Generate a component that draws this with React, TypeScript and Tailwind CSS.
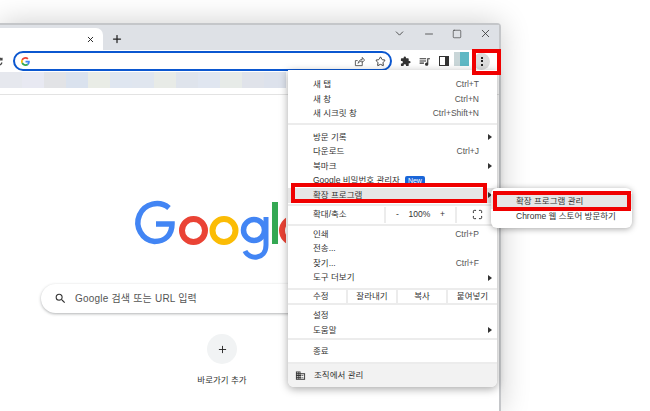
import { Maximize, Minus, Plus, Square, Star, X, ChevronDown } from "lucide-react";
import { MdDomain, MdExtension, MdQueueMusic, MdSearch } from "react-icons/md";

const kr = "font-['Segoe_UI','Liberation_Sans','Noto_Sans_CJK_KR',sans-serif]";

const patches = ["#e6e8ee", "#e8e9f2", "#e2e3e6", "#dae2ee", "#e9ece6", "#dfe6f0", "#e0e6ef", "#e8ebe7", "#dfe4ec", "#e0e6f0", "#e7ebe8", "#e0e3ea", "#dde2ec"];

function Row({ label, shortcut, arrow }: { label: string; shortcut?: string; arrow?: boolean }) {
    return (
        <div className="flex h-[14.6px] items-center pl-[25px] pr-[5px] text-[#333]">
            <span className="flex-1 whitespace-nowrap">{label}</span>
            {shortcut && <span className="mr-[13px] text-[#555]">{shortcut}</span>}
            {arrow && <span className="h-0 w-0 border-y-[3px] border-l-[4px] border-y-transparent border-l-[#333]" />}
        </div>
    );
}

function GoogleLogo() {
    return (
        <svg width="158" height="70" viewBox="0 0 158 70" aria-label="Google" className="block">
            <path d="M41 13 A19 19 0 1 0 26.500 46.500 C37 46.500 44 40 44 29 L28 29" fill="none" stroke="#4285f4" strokeWidth="5.500" />
            <circle cx="65.500" cy="35.500" r="11.500" fill="none" stroke="#ea4335" strokeWidth="6" />
            <circle cx="96" cy="35.500" r="11.500" fill="none" stroke="#fbbc05" strokeWidth="6" />
            <circle cx="126" cy="35" r="10.500" fill="none" stroke="#4285f4" strokeWidth="5.500" />
            <path d="M138 22 V50 C138 65 121 65 117 56" fill="none" stroke="#4285f4" strokeWidth="5" />
            <path d="M147 7 V49" stroke="#34a853" strokeWidth="6" />
            <circle cx="166" cy="35.500" r="12" fill="none" stroke="#ea4335" strokeWidth="6" />
        </svg>
    );
}

export default function App() {
    return (
        <div className={`relative h-[411px] w-[650px] overflow-hidden bg-white text-[8.5px] ${kr}`}>
            {/* browser window */}
            <div className="absolute left-0 top-[23px] flex h-[388px] w-[501px] flex-col rounded-tr-[4px] border-r-2 border-t-2 border-[#c4c6c9] bg-white shadow-[0_0_30px_rgba(0,0,0,0.2)]">
                {/* tab strip */}
                <div className="flex h-[25px] shrink-0 items-end bg-[#dee1e6]">
                    <div className="flex h-[22px] w-[103px] items-center justify-end rounded-tr-[7px] bg-white pr-[8px]">
                        <X size={9} strokeWidth={2.5} className="text-[#222]" />
                    </div>
                    <div className="ml-[7.5px] flex h-[22px] items-start pt-[5px]">
                        <Plus size={12} strokeWidth={2.5} className="text-[#222]" />
                    </div>
                    <div className="flex-1" />
                    <div className="mb-[10px] flex items-center gap-[17px] pr-[7px] text-[#333]">
                        <ChevronDown size={13} strokeWidth={1.5} />
                        <Minus size={12} strokeWidth={1.5} />
                        <Square size={10} strokeWidth={1.5} className="rounded-[2px]" />
                        <X size={13} strokeWidth={1.5} />
                    </div>
                </div>
                {/* toolbar */}
                <div className="relative flex h-[22px] shrink-0 items-center bg-white">
                    <div className="w-[13px] overflow-hidden">
                        <svg width="9" height="9" viewBox="0 0 9 9" fill="none" stroke="#444" strokeWidth="1.2" className="ml-[-6px]">
                            <path d="M7.500 2.500A3.600 3.600 0 1 0 8 5.500M8 .8V3H5.800" />
                        </svg>
                    </div>
                    <div className="flex h-[20px] w-[379px] items-center rounded-full border-2 border-[#0b57d0] pl-[6px] pr-[4.5px]">
                        <svg width="9" height="9" viewBox="0 0 48 48">
                            <path fill="#ea4335" d="M24 9.5c3.5 0 6.7 1.2 9.2 3.6l6.9-6.9C35.9 2.4 30.5 0 24 0 14.6 0 6.5 5.4 2.6 13.2l8 6.2C12.4 13.7 17.700 9.500 24 9.500z" />
                            <path fill="#4285f4" d="M47 24.500c0-1.600-.100-3.100-.400-4.500H24v9h13c-.600 3-2.200 5.500-4.800 7.200l7.700 6C44.400 38 47 31.800 47 24.500z" />
                            <path fill="#fbbc05" d="M10.500 28.600c-.500-1.400-.800-3-.800-4.600s.300-3.200.800-4.600l-8-6.200C.900 16.500 0 20.100 0 24s.900 7.500 2.600 10.800l7.900-6.200z" />
                            <path fill="#34a853" d="M24 48c6.500 0 11.900-2.100 15.900-5.800l-7.700-6c-2.200 1.400-4.900 2.300-8.200 2.300-6.300 0-11.600-4.200-13.500-9.900l-8 6.200C6.500 42.600 14.600 48 24 48z" />
                        </svg>
                        <div className="flex-1" />
                        <svg width="11" height="11" viewBox="0 0 12 12" fill="none" stroke="#555" strokeWidth="1" className="mr-[10px]">
                            <path d="M9 6.500V10.500H1.500V5H4" />
                            <path d="M4.500 8C5 5 7 3.800 9 3.800V1.500L11.500 4.500 9 7V5.500C7 5.500 5.500 6.200 4.500 8Z" />
                        </svg>
                        <Star size={11} strokeWidth={2} className="text-[#333]" />
                    </div>
                    <div className="ml-[8px] flex items-center gap-[7px] text-[#333]">
                        <MdExtension size={11} />
                        <MdQueueMusic size={13} />
                        <svg width="10" height="10" viewBox="0 0 10 10" className="ml-[1px]">
                            <rect x="0.500" y="0.500" width="9" height="9" fill="none" stroke="#333" strokeWidth="1" />
                            <rect x="6" y="0.500" width="3.500" height="9" fill="#333" />
                        </svg>
                    </div>
                    <div className="ml-[5px] flex h-[18px] w-[15px] shrink-0 self-start pt-[2px]">
                        <div className="h-[14px] w-[6px] bg-[#c9d6d8]" />
                        <div className="h-[14px] w-[9px] bg-[#5fb8c4]" />
                    </div>
                    <div className="ml-[4px] flex h-[17px] w-[17px] shrink-0 flex-col items-center justify-center gap-[1.500px] rounded-full bg-[#dcdcdc]">
                        <span className="h-[2px] w-[2px] bg-[#222]" />
                        <span className="h-[2px] w-[2px] bg-[#222]" />
                        <span className="h-[2px] w-[2px] bg-[#222]" />
                    </div>
                </div>
                {/* bookmark bar, blurred out */}
                <div className="flex h-[16px] shrink-0 bg-white">
                    {patches.map((c) => (
                        <div key={c} className="h-full w-[22px]" style={{ backgroundColor: c }} />
                    ))}
                </div>
                <div className="mt-[6px] h-[1px] shrink-0 bg-[#e3e3e3]" />
                {/* new tab page */}
                <div className="relative flex-1">
                    <div className="pl-[128px] pt-[100px]">
                        <GoogleLogo />
                    </div>
                    <div className="ml-[41px] mt-[19px] flex h-[29px] w-[420px] items-center rounded-full bg-white pl-[13px] shadow-[0_1px_3px_rgba(60,64,67,0.4)]">
                        <MdSearch size={13} className="text-[#333]" />
                        <span className="ml-[8px] text-[10px] tracking-[0.2px] text-[#555]">Google 검색 또는 URL 입력</span>
                    </div>
                    <div className="ml-[182px] mt-[21px] flex w-[80px] flex-col items-center">
                        <div className="flex h-[30px] w-[30px] items-center justify-center rounded-full bg-[#f1f3f4]">
                            <Plus size={11} strokeWidth={2} className="text-[#222]" />
                        </div>
                        <span className="mt-[10px] whitespace-nowrap text-[8.500px] text-[#333]">바로가기 추가</span>
                    </div>
                </div>
            </div>

            {/* chrome menu */}
            <div className="absolute left-[288px] top-[70px] flex h-[317px] w-[209px] flex-col overflow-hidden rounded-b-[6px] bg-white pt-[7px] shadow-[0_2px_8px_rgba(0,0,0,0.35)]">
                <Row label="새 탭" shortcut="Ctrl+T" />
                <Row label="새 창" shortcut="Ctrl+N" />
                <Row label="새 시크릿 창" shortcut="Ctrl+Shift+N" />
                <div className="my-[2.5px] h-[2px] bg-[#ececec]" />
                <div className="mt-[2px]" />
                <Row label="방문 기록" arrow />
                <Row label="다운로드" shortcut="Ctrl+J" />
                <Row label="북마크" arrow />
                <div className="flex h-[14.600px] items-center pl-[25px] text-[#333]">
                    <span>Google 비밀번호 관리자</span>
                    <span className="ml-[5px] rounded-[2px] bg-[#1a66d8] px-[3px] text-[7px] leading-[10px] text-white">New</span>
                </div>
                <div className="bg-[#e6e6e6]">
                    <Row label="확장 프로그램" arrow />
                </div>
                <div className="my-[1px] h-[2px] bg-[#ececec]" />
                <div className="flex h-[16px] items-center pl-[25px] text-[#333]">
                    <span className="w-[71px]">확대/축소</span>
                    <div className="flex h-full w-[73px] items-center justify-between border-x-2 border-[#ececec] px-[10px] text-[#333]">
                        <span>-</span>
                        <span>100%</span>
                        <span>+</span>
                    </div>
                    <div className="flex flex-1 justify-center">
                        <Maximize size={11} strokeWidth={2} className="text-[#222]" />
                    </div>
                </div>
                <div className="mb-[1px] mt-[1px] h-[2px] bg-[#ececec]" />
                <Row label="인쇄" shortcut="Ctrl+P" />
                <Row label="전송..." />
                <Row label="찾기..." shortcut="Ctrl+F" />
                <Row label="도구 더보기" arrow />
                <div className="mt-[3px] flex h-[17px] items-center border-y-2 border-[#ececec] text-[#333]">
                    <span className="w-[58px] pl-[25px]">수정</span>
                    <span className="flex h-full w-[50px] items-center justify-center border-l-2 border-[#ececec]">잘라내기</span>
                    <span className="flex h-full w-[50px] items-center justify-center border-l-2 border-[#ececec]">복사</span>
                    <span className="flex h-full flex-1 items-center justify-center border-l-2 border-[#ececec]">붙여넣기</span>
                </div>
                <div className="mt-[3px]" />
                <Row label="설정" />
                <Row label="도움말" arrow />
                <div className="mb-[4px] mt-[1px] h-[2px] bg-[#ececec]" />
                <Row label="종료" />
                <div className="mt-[3px] h-[2px] bg-[#ececec]" />
                <div className="flex flex-1 items-center gap-[8px] bg-[#f2f2f2] pl-[7px] text-[#333]">
                    <MdDomain size={11} className="text-[#333]" />
                    <span>조직에서 관리</span>
                </div>
            </div>

            {/* extensions submenu */}
            <div className="absolute left-[491px] top-[188px] w-[141px] rounded-[6px] bg-white pb-[4px] pt-[6px] text-[#333] shadow-[0_1px_6px_rgba(0,0,0,0.35)]">
                <div className="flex h-[15px] items-center bg-[#e6e6e6] pl-[25px]">확장 프로그램 관리</div>
                <div className="flex h-[15px] items-center pl-[25px]">Chrome 웹 스토어 방문하기</div>
            </div>

            {/* red callouts */}
            <div className="absolute left-[472px] top-[49px] h-[26px] w-[29px] border-[4px] border-[#f00000]" />
            <div className="absolute left-[291px] top-[183px] h-[20px] w-[196px] border-[4px] border-[#f00000]" />
            <div className="absolute left-[493px] top-[191px] h-[20px] w-[138px] border-[4px] border-[#f00000]" />
        </div>
    );
}
